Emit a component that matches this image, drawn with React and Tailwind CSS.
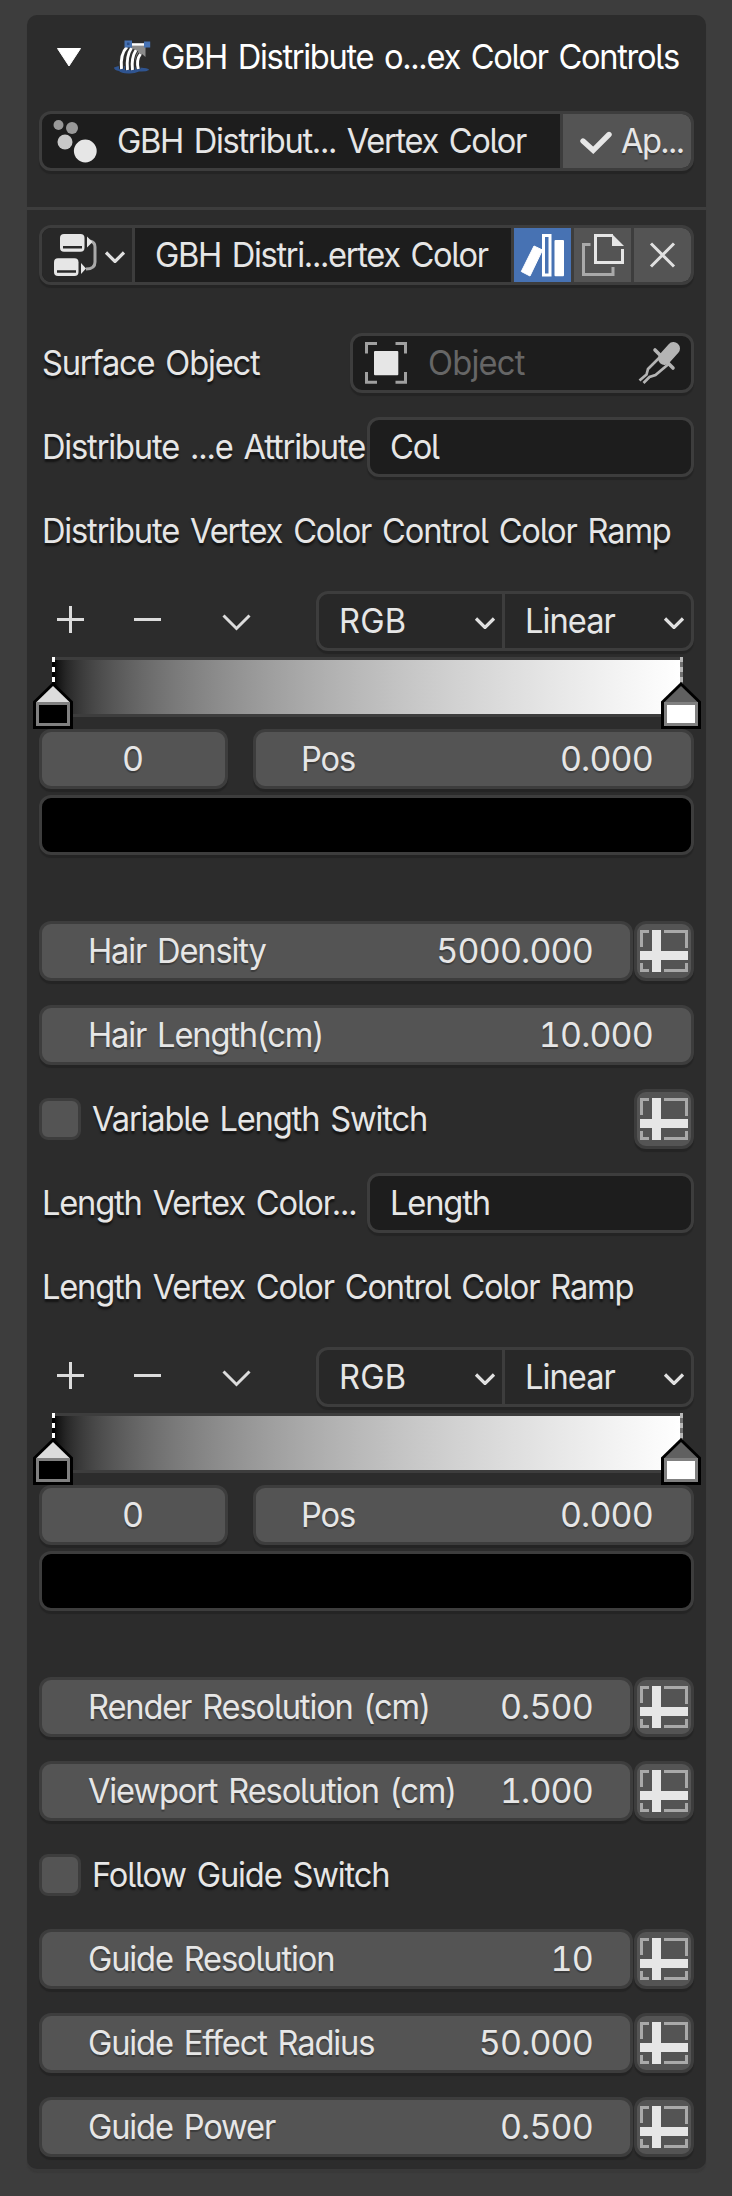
import React from "react";

const txt = "block origin-left scale-x-[0.96] whitespace-pre leading-none text-[34px] tracking-[-1.2px] [word-spacing:3px]";
const tight = "tracking-[-1.38px]!";
const box = "box-border flex h-[60px] items-center overflow-hidden rounded-[12px] border-[3px] border-[#3d3d3d] shadow-[0_3px_1px_rgba(0,0,0,0.18)]";

function Icon({ view, className = "", children }) {
  const [, , w, h] = view.split(" ");
  return (
    <svg viewBox={view} width={w} height={h} className={"shrink-0 " + className} fill="none">
      {children}
    </svg>
  );
}

function Label({ children }) {
  return <span className={txt + " pl-[3px] [text-shadow:0_3px_2px_rgba(0,0,0,0.55)]"}>{children}</span>;
}

function HairIcon() {
  return (
    <Icon view="112 38 42 38">
      <path d="M114 67.500Q119 65 126 66L144 68Q149 68.500 149 70Q146 72 139 71.500Q134 74 128 73.500Q121 73 119 71Q114 70 114 67.500Z" fill="#2f5490" />
      <path d="M131 46H145.500V57L142 54L138 62L132 58Z" fill="#8b8b8b" />
      <path d="M127 47Q120 54 121.500 69M131.500 48Q126 56 127.500 70M136 50Q131 58 132.500 70M140.500 54Q136 60 138.300 69" stroke="#303030" strokeWidth="5" />
      <path d="M127 47Q120 54 121.500 69M131.500 48Q126 56 127.500 70M136 50Q131 58 132.500 70M140.500 54Q136 60 138.300 69" stroke="#fff" strokeWidth="2.900" />
      <path d="M131 44.500H145" stroke="#fff" strokeWidth="2.600" />
      <path d="M124.500 40.500h7.500v7h-7.500zM144 41.500h6.200v6h-6.200z" fill="#4772b3" />
      <path d="M127 42.500h2.500v2.500h-2.500z" fill="#2c4f88" />
    </Icon>
  );
}

function SpheresIcon() {
  return (
    <Icon view="52 118 46 46">
      <circle cx="58.500" cy="125" r="5" fill="#999" />
      <circle cx="72" cy="128" r="6" fill="#999" />
      <circle cx="65" cy="142" r="7.500" fill="#c8c8c8" />
      <circle cx="85.300" cy="151" r="11.400" fill="#e6e6e6" />
    </Icon>
  );
}

function NodesIcon() {
  return (
    <Icon view="52 232 46 46">
      <path d="M90 241Q95 242 95 247V262Q95 269 86 269" stroke="#a9a9a9" strokeWidth="3" />
      <path d="M87 236.500L92.500 242L87 247.500ZM81 263L86 268.500L81 274Z" fill="#e6e6e6" />
      <rect x="60" y="234" width="24.500" height="17.700" rx="4" fill="#e6e6e6" />
      <rect x="54" y="258.300" width="24.500" height="17.700" rx="4" fill="#e6e6e6" />
      <path d="M63 247.300H82M57 271.500H76" stroke="#2a2a2a" strokeWidth="2.600" />
    </Icon>
  );
}

function Chevron() {
  return (
    <Icon view="104 247 22 16">
      <path d="M106 252.500L115 261.500L124 252.500" stroke="#e0e0e0" strokeWidth="3.200" />
    </Icon>
  );
}

function CheckIcon() {
  return (
    <Icon view="578 128 34 26">
      <path d="M582 141L592.200 150.300L608 134.500" stroke="#e6e6e6" strokeWidth="5.400" strokeLinecap="round" />
    </Icon>
  );
}

function LibraryIcon() {
  return (
    <Icon view="513 228 57 54">
      <path d="M533 246L541.500 250L529 276L520.300 271.500Z" fill="#fff" stroke="#fff" strokeWidth="1" strokeLinejoin="round" />
      <rect x="542.500" y="235.500" width="6.500" height="39.500" stroke="#fff" strokeWidth="3" />
      <rect x="553.500" y="240" width="9.500" height="36.300" rx="1" fill="#fff" />
    </Icon>
  );
}

function DuplicateIcon() {
  return (
    <Icon view="573 228 57 54">
      <path d="M589.500 244.500H582.500V274.500H612V267" stroke="#a9a9a9" strokeWidth="3" />
      <path d="M612 235.500H594.500V262.500H621.500V249" stroke="#e6e6e6" strokeWidth="3" />
      <path d="M611 234L623 246H611Z" fill="#e6e6e6" />
    </Icon>
  );
}

function CloseIcon() {
  return (
    <Icon view="633 228 57 54">
      <path d="M650 243.500L673 266.500M673 243.500L650 266.500" stroke="#e0e0e0" strokeWidth="3" />
    </Icon>
  );
}

function ObjectIcon() {
  return (
    <Icon view="364 341 46 44">
      <path d="M366.500 353.500V343.500H377M395.500 343.500H405.500V353.500M366.500 372V382.300H377M395.500 382.300H405.500V372" stroke="#a0a0a0" strokeWidth="3" />
      <rect x="374" y="351" width="24.300" height="24.300" rx="1" fill="#e6e6e6" />
    </Icon>
  );
}

function DropperIcon() {
  return (
    <Icon view="636 340 46 46">
      <path d="M673.500 348.500L664.500 358.500" stroke="#b4b4b4" strokeWidth="13" strokeLinecap="round" />
      <path d="M655 350L673 368" stroke="#b4b4b4" strokeWidth="3.600" strokeLinecap="round" />
      <path d="M660 357L648 369L646.500 374.500L639.500 380.500M668 364.500L655.500 375L649.500 377L643.500 383" stroke="#b4b4b4" strokeWidth="2.700" />
    </Icon>
  );
}

function AttributeButton() {
  return (
    <div className={box + " w-[60px] shrink-0 justify-center bg-[#545454]"}>
      <Icon view="638 930 50 42">
        <path d="M640.500 947V931.500H648M663 931.500H685.500V948M640.500 963V970.500H648M663 970.500H685.500V963" stroke="#a9a9a9" strokeWidth="3" />
        <path d="M651 930h9v42h-9zM639 951h48v9h-48z" fill="#e6e6e6" />
      </Icon>
    </div>
  );
}

function Field({ name, value, attribute = false }) {
  return (
    <div className="flex h-[84px] items-start">
      <div className={box + " flex-1 justify-between bg-[#545454] pl-[46px] " + (attribute ? "mr-[1px] pr-[37px]" : "pr-[38px]")}>
        <span className={txt + " [text-shadow:0_2px_1px_rgba(0,0,0,0.3)]"}>{name}</span>
        <Num>{value}</Num>
      </div>
      {attribute && <AttributeButton />}
    </div>
  );
}

function Num({ children }) {
  return (
    <span className="text-[34px] leading-none tracking-[-0.85px] [font-feature-settings:'tnum'] [text-shadow:0_2px_1px_rgba(0,0,0,0.3)]">
      {children}
    </span>
  );
}

function CheckRow({ name, attribute = false }) {
  return (
    <div className="flex h-[84px] items-start">
      <div className="flex h-[60px] flex-1 items-center">
        <div className="size-[42px] rounded-[9px] border-[3px] border-[#3d3d3d] bg-[#545454]" />
        <span className={txt + " ml-[11px] [text-shadow:0_3px_2px_rgba(0,0,0,0.55)]"}>{name}</span>
      </div>
      {attribute && <AttributeButton />}
    </div>
  );
}

function TextRow({ name, value }) {
  return (
    <div className="flex h-[84px] items-start">
      <div className="flex h-[60px] w-[328px] shrink-0 items-center">
        <Label>{name}</Label>
      </div>
      <div className={box + " flex-1 bg-[#1d1d1d] pl-[20px]"}>
        <span className={txt}>{value}</span>
      </div>
    </div>
  );
}

function Stop({ color, roof, className, dash }) {
  return (
    <Icon view="33 657 40 72" className={"absolute top-0 " + className}>
      <path d="M53.500 657V684" stroke={dash[1]} strokeWidth="3" />
      <path d="M53.500 657V684" stroke={dash[0]} strokeWidth="3" strokeDasharray="5 5" />
      <path d="M53 682L33 701.500V729H73V701.500Z" fill="#000" />
      <path d="M53 686L36.500 702H69.500Z" fill={roof} />
      <path d="M36 702h34v24h-34z" fill="#808080" />
      <path d="M39 705h28v18h-28z" fill={color} />
    </Icon>
  );
}

function ColorRamp() {
  return (
    <div className="flex flex-col pb-[66px]">
      <div className="flex h-[66px] items-start">
        <div className="flex h-[60px] flex-1 items-center">
          <Icon view="39 596 240 50">
            <path d="M57 619.500H84M70.500 606V633M134 619.500H161M223.500 615.500L236.500 628.500L249.500 615.500" stroke="#dcdcdc" strokeWidth="3" />
          </Icon>
        </div>
        <div className={box + " w-[378px] bg-[#282828]"}>
          <div className="flex h-full w-[186px] shrink-0 items-center justify-between border-r-[3px] border-[#3d3d3d] pl-[20px] pr-[6px]">
            <span className={txt + " tracking-[0.2px]!"}>RGB</span>
            <Chevron />
          </div>
          <div className="flex h-full flex-1 items-center justify-between pl-[20px] pr-[6px]">
            <span className={txt + " tracking-[-1px]!"}>Linear</span>
            <Chevron />
          </div>
        </div>
      </div>
      <div className="relative mx-[12px] h-[72px]">
        <div className="ml-[3px] h-[60px] border-y-[3px] border-[#3d3d3d] bg-[linear-gradient(to_right_in_srgb-linear,#000,#fff)]" />
        <Stop className="left-[-18px]" color="#000" roof="#dcdcdc" dash={["#fff", "#000"]} />
        <Stop className="right-[-19px]" color="#fff" roof="#606060" dash={["#b8b8b8", "#707070"]} />
      </div>
      <div className="flex h-[66px] items-start justify-between">
        <div className={box + " w-[189px] justify-center bg-[#545454] pr-[2px]"}>
          <Num>0</Num>
        </div>
        <div className={box + " w-[441px] justify-between bg-[#545454] pl-[45px] pr-[38px]"}>
          <span className={txt + " [text-shadow:0_2px_1px_rgba(0,0,0,0.3)]"}>Pos</span>
          <Num>0.000</Num>
        </div>
      </div>
      <div className={box + " bg-black"} />
    </div>
  );
}

export default function App() {
  return (
    <div className="h-[2196px] w-[732px] bg-[#3d3d3d] pr-[26px] pl-[27px] pt-[15px] font-['Inter','Liberation_Sans',sans-serif] font-[370] text-[#e6e6e6] [font-feature-settings:'cv05']">
      <div className="h-[2154px] rounded-[10px] bg-[#2c2c2c] shadow-[0_4px_1px_#393939]">
        <div className="flex h-[96px] items-start text-white">
          <div className="flex h-[84px] items-center pl-[30px]">
            <Icon view="57 47 24 20">
              <path d="M57.500 48.500H80.500L69 66Z" fill="#fff" stroke="#fff" strokeLinejoin="round" />
            </Icon>
            <div className="ml-[31px] flex">
              <HairIcon />
            </div>
            <span className={txt + " ml-[7px] " + tight}>GBH Distribute o...ex Color Controls</span>
          </div>
        </div>
        <div className="h-[99px] border-b-[3px] border-[#3d3d3d] px-[12px]">
          <div className={box + " bg-[#1d1d1d]"}>
            <div className="flex h-full min-w-0 flex-1 items-center border-r-[3px] border-[#3d3d3d] pl-[10px]">
              <SpheresIcon />
              <span className={txt + " ml-[19px] " + tight}>GBH Distribut... Vertex Color</span>
            </div>
            <div className="flex h-full w-[128px] shrink-0 items-center bg-[#545454] pl-[16px]">
              <CheckIcon />
              <span className={txt + " ml-[8px] tracking-[-1.7px]! [text-shadow:0_2px_1px_rgba(0,0,0,0.3)]"}>Ap...</span>
            </div>
          </div>
        </div>
        <div className="px-[12px] pt-[15px]">
          <div className="h-[108px]">
            <div className={box + " bg-[#1d1d1d]"}>
              <div className="flex h-full w-[93px] shrink-0 items-center border-r-[3px] border-[#3d3d3d] bg-[#282828] pl-[10px]">
                <NodesIcon />
                <div className="ml-[6px] flex">
                  <Chevron />
                </div>
              </div>
              <div className="flex h-full min-w-0 flex-1 items-center pl-[20px]">
                <span className={txt + " " + tight}>GBH Distri...ertex Color</span>
              </div>
              <div className="flex h-full shrink-0 border-l-[3px] border-[#3d3d3d] bg-[#4772b3]">
                <LibraryIcon />
              </div>
              <div className="flex h-full shrink-0 border-l-[3px] border-[#3d3d3d] bg-[#545454]">
                <DuplicateIcon />
              </div>
              <div className="flex h-full shrink-0 border-l-[3px] border-[#3d3d3d] bg-[#545454]">
                <CloseIcon />
              </div>
            </div>
          </div>
          <div className="flex h-[84px] items-start">
            <div className="flex h-[60px] w-[311px] items-center">
              <Label>Surface Object</Label>
            </div>
            <div className={box + " flex-1 bg-[#1d1d1d] pl-[11px] pr-[9px]"}>
              <ObjectIcon />
              <span className={txt + " ml-[18px] flex-1 text-[#666] tracking-[-0.8px]!"}>Object</span>
              <DropperIcon />
            </div>
          </div>
          <TextRow name="Distribute ...e Attribute" value="Col" />
          <div className="flex h-[90px] items-start">
            <div className="flex h-[60px] items-center">
              <Label>Distribute Vertex Color Control Color Ramp</Label>
            </div>
          </div>
          <ColorRamp />
          <Field name="Hair Density" value="5000.000" attribute />
          <Field name="Hair Length(cm)" value="10.000" />
          <CheckRow name="Variable Length Switch" attribute />
          <TextRow name="Length Vertex Color..." value="Length" />
          <div className="flex h-[90px] items-start">
            <div className="flex h-[60px] items-center">
              <Label>Length Vertex Color Control Color Ramp</Label>
            </div>
          </div>
          <ColorRamp />
          <Field name="Render Resolution (cm)" value="0.500" attribute />
          <Field name="Viewport Resolution (cm)" value="1.000" attribute />
          <CheckRow name="Follow Guide Switch" />
          <Field name="Guide Resolution" value="10" attribute />
          <Field name="Guide Effect Radius" value="50.000" attribute />
          <Field name="Guide Power" value="0.500" attribute />
        </div>
      </div>
    </div>
  );
}
